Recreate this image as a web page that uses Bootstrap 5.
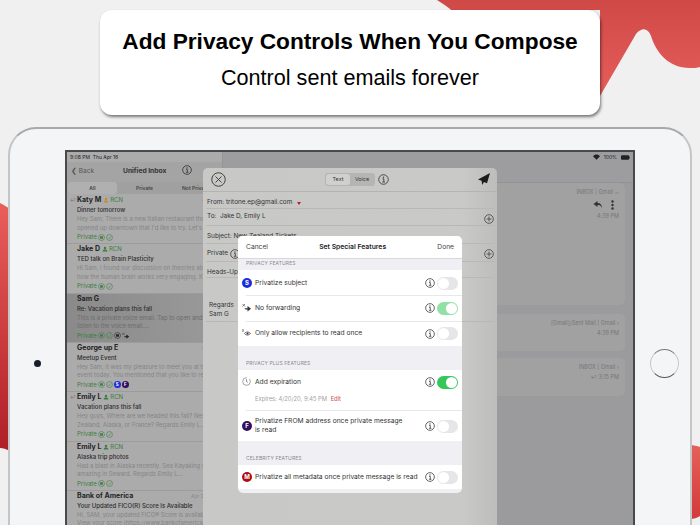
<!DOCTYPE html>
<html lang="en">
<head>
  <meta charset="UTF-8" />
  <meta name="viewport" content="width=device-width, initial-scale=1.0" />
  <title>Add Privacy Controls When You Compose</title>
  <link href="https://cdn.jsdelivr.net/npm/bootstrap@5.3.3/dist/css/bootstrap.min.css" rel="stylesheet">
  <style>
    html, body { margin: 0; background: #f0f0f0; }
    body { font-family: "Liberation Sans", Arial, sans-serif; }
    .stage { position: relative; width: 700px; height: 525px; overflow: hidden; background: #f0f0f0; }
    .blobs { position: absolute; left: 0; top: 0; }

    .banner { position: relative; width: 500px; height: 105px; margin: 10px 0 0 100px; border-radius: 12px; background: #fff; box-shadow: 1px 2px 3px rgba(0,0,0,.5); color: #000; }
    .banner h1 { font-size: 22.7px; font-weight: 700; line-height: 32px; margin: 0; padding-top: 15px; }
    .banner p { font-size: 21.6px; line-height: 28px; margin: 7px 0 0; }

    .ipad { position: relative; width: 684px; height: 400px; margin: 12px 0 0 8px; padding: 21px 57px 0; border-radius: 28px 28px 0 0; background: #f4f5f7; border: 2px solid #c4c5c6; border-bottom: 0; border-top-color: #a8a9aa; }
    .cam { position: absolute; left: 24px; top: 231px; width: 7px; height: 7px; border-radius: 50%; background: #15202b; }
    .homebtn { position: absolute; left: 640px; top: 220px; width: 29px; height: 29px; border-radius: 50%; border: 1px solid #c9c9c9; border-top-color: #777; border-bottom-color: #555; }

    .screen { position: relative; display: flex; height: 100%; width: 570px; margin-left: -2px; border: solid #47494a; border-width: 2px 2px 0; background: #9b9b9d; font-family: Inter, "Liberation Sans", sans-serif; color: #2a2a2a; overflow: hidden; }
    .pane-list { width: 156px; flex: none; background: #ababab; border-right: 1px solid #969696; }
    .pane-read { flex: 1; min-width: 0; display: flex; flex-direction: column; }
    .sbar { height: 10px; font-size: 5px; line-height: 10px; padding: 0 3px; color: #222; }
    .lnav { height: 20px; background: #a4a4a4; position: relative; }
    .lnav .back { color: #555; position: absolute; left: 4px; top: 3px; font-size: 6.5px; line-height: 12px; }
    .lnav .ttl { position: absolute; left: 56px; top: 3px; font-weight: 700; font-size: 6.7px; line-height: 12px; color: #333; }
    .lnav svg.inf { position: absolute; left: 115px; top: 3px; }
    .seg { display: flex; height: 12px; margin: 0 0 1px 1px; background: #a0a0a0; font-size: 5px; line-height: 12px; font-weight: 600; text-align: center; color: #444; }
    .seg span { width: 51px; flex: none; }
    .seg .on { background: #b0b0b0; border-radius: 3px; width: 49px; margin-right: 2px; }
    .msg { height: 49.33px; padding: 0 0 0 10px; position: relative; border-bottom: 1px solid #9c9c9c; white-space: nowrap; overflow: hidden; }
    .msg.sel { background: linear-gradient(90deg,#8a8a8a,#9a9a9a); }
    .msg .nm { font-size: 7px; font-weight: 700; line-height: 10px; color: #252525; display: flex; align-items: center; gap: 2px; }
    .msg .rcn { font-weight: 400; font-size: 6px; color: #3c7d40; margin-left: -1px; }
    .msg .subj { font-size: 6px; line-height: 10px; font-weight: 500; color: #2e2e2e; }
    .msg .pv { font-size: 5.9px; line-height: 8.5px; color: #858585; }
    .sel .pv { color: #6c6c6c; }
    .msg .st { font-size: 6px; line-height: 10px; color: #3c7d40; display: flex; align-items: center; gap: 1px; }
    .msg .tm { position: absolute; right: 0; top: 0; font-size: 5px; line-height: 10px; color: #8a8a8a; }
    .msg .rp { position: absolute; left: 3px; top: 0; font-size: 5px; line-height: 10px; color: #777; }
    .dotb { display: inline-block; width: 7px; height: 7px; border-radius: 50%; color: #fff; font-size: 4.5px; line-height: 7px; text-align: center; font-weight: 700; }
    .dotb.big { width: 10px; height: 10px; line-height: 10px; font-size: 6px; left: 4px; }
    .bg-s { background: #1b2dd8; }
    .bg-f { background: #32105c; }
    .bg-m { background: #a80f12; }

    .rhead { height: 31px; background: #9d9d9f; flex: none; border-bottom: 1px solid #939393; position: relative; }
    .rcard { margin: 0 8px 0 0; border-radius: 5px; background: #a1a1a2; font-size: 5.5px; color: #777; text-align: right; padding: 5px 6px 0 0; flex: none; }
    .rcard .lbl { line-height: 9px; }
    .rc1 { height: 122px; }
    .rc2 { height: 37px; margin-top: 9px; }
    .rc3 { height: 38px; margin-top: 7px; }
    .acts { height: 13px; margin: 1px 5px 0 0; }
    .after { margin-top: 1px; }

    .compose { position: absolute; left: 136px; top: 16px; width: 294px; height: 362px; border-radius: 5px 5px 0 0; background: linear-gradient(90deg,#c8c9c7,#c9cac8 88%,#bdbebc); font-size: 6.4px; color: #333; }
    .ctop { height: 24px; position: relative; border-bottom: 1px solid #b4b5b3; }
    .ctop .xb { position: absolute; left: 8px; top: 4px; }
    .ctop .send { position: absolute; left: 275px; top: 5px; }
    .ctop .inf2 { position: absolute; left: 175px; top: 6px; }
    .tv { position: absolute; left: 122px; top: 5px; width: 50px; height: 13px; display: flex; border-radius: 3px; background: #b5b6b4; padding: 1px; font-size: 5.4px; line-height: 11px; text-align: center; }
    .tv span { flex: 1; }
    .tv .on { background: #d0d1cf; border-radius: 3px; }
    .cf { position: relative; margin: 0 3px; padding: 3px 0 0 1px; display: flex; align-items: center; gap: 3px; border-bottom: 1px solid #b8b9b7; }
    .f1 { height: 17px; padding-top: 6px; }
    .f2 { height: 17px; align-items: flex-start; }
    .f3 { height: 18px; padding-top: 5px; }
    .f4 { height: 18px; gap: 2px; }
    .f5 { height: 16px; padding-top: 6px; }
    .f6 { height: 44px; align-items: flex-end; padding: 0 0 2px 3px; line-height: 9px; }
    .tri { width: 0; height: 0; border: solid transparent; border-width: 3px 2.5px 0; border-top-color: #b3222a; margin-left: 2px; }
    .cf svg.pl { position: absolute; left: 278px; top: 5px; }

    .sheet { position: absolute; left: 35px; top: 68px; width: 224px; height: 257px; border-radius: 5px; background: #f0f0f4; overflow: hidden; font-size: 6.7px; color: #333; }
    .shead { height: 23px; background: #fff; border-bottom: 1px solid #d8d8dc; display: flex; align-items: center; justify-content: space-between; padding: 1px 8px 0; color: #444; }
    .shead b { font-weight: 600; color: #222; font-size: 6.8px; }
    .sect { font-size: 5px; color: #8a8a8e; padding-left: 8px; letter-spacing: .1px; }
    .s1 { height: 11px; line-height: 9px; }
    .s2 { height: 24px; line-height: 10px; padding-top: 12px; }
    .rows { --bs-list-group-bg: #fff; --bs-list-group-border-width: 0; --bs-list-group-item-padding-x: 0; --bs-list-group-item-padding-y: 0; --bs-list-group-color: #333; }
    .rw { display: flex; align-items: center; height: 25.33px; position: relative; padding: 1px 4px 0 17px !important; font-size: 6.7px; line-height: 9px; }
    .rw + .rw::before { content: ""; position: absolute; left: 8px; right: 0; top: 0; border-top: 1px solid #e8e8ea; }
    .rw .ic { position: absolute; left: 4px; top: 50%; margin-top: -5px; }
    .rw .tx { flex: 1; min-width: 0; }
    .rw.tall { height: 40.5px; display: block; padding-top: 6px !important; }
    .tall .ln { display: flex; align-items: center; height: 13px; }
    .tall .ic { top: 7px; margin-top: 0; }
    .exp { font-size: 5.8px; color: #a2a2a2; margin-top: 6px; line-height: 8px; }
    .exp span { color: #d24a4f; margin-left: 2px; }
    .rw.two { height: 30.5px; }
    .rw.two .tx { padding-right: 20px; }
    .rw.last { height: 24px; }
    .rw svg.inf { flex: none; margin-right: 2px; }
    .form-switch.tg { padding: 0; margin: 0; min-height: 0; height: 13px; line-height: 0; flex: none; }
    .form-switch.tg .form-check-input { width: 21px; height: 13px; margin: 0; float: none; border: 0; background-color: #e6e6e8; --bs-form-switch-bg: url("data:image/svg+xml,%3csvg xmlns='http://www.w3.org/2000/svg' viewBox='-4 -4 8 8'%3e%3ccircle r='3.4' fill='%23fff'/%3e%3c/svg%3e"); }
    .form-switch.tg .form-check-input:checked { background-color: #35c759; }
    .form-switch.tg .form-check-input.pale:checked { background-color: #93e0a6; }
  </style>
</head>
<body>
  <svg width="0" height="0" class="position-absolute">
    <symbol id="i-info" viewBox="0 0 20 20"><circle cx="10" cy="10" r="8.7" fill="none" stroke="currentColor" stroke-width="1.5"/><circle cx="10" cy="5.8" r="1.2" fill="currentColor"/><path d="M8 8.8h2.6v5.6M7.8 14.6h5" fill="none" stroke="currentColor" stroke-width="1.5"/></symbol>
    <symbol id="i-plus" viewBox="0 0 20 20"><circle cx="10" cy="10" r="8.7" fill="none" stroke="currentColor" stroke-width="1.4"/><path d="M10 5v10M5 10h10" stroke="currentColor" stroke-width="1.4"/></symbol>
    <symbol id="i-lock" viewBox="0 0 20 20"><circle cx="10" cy="10" r="8.5" fill="none" stroke="currentColor" stroke-width="1.6"/><rect x="6" y="6.5" width="8" height="7" fill="currentColor"/></symbol>
    <symbol id="i-check" viewBox="0 0 20 20"><circle cx="10" cy="10" r="8.5" fill="none" stroke="currentColor" stroke-width="1.6"/><path d="M6 10.5l3 3 5.5-7" fill="none" stroke="currentColor" stroke-width="1.6"/></symbol>
    <symbol id="i-person" viewBox="0 0 20 20"><circle cx="10" cy="6.5" r="4" fill="currentColor"/><path d="M2 18c1-6 4-6.500 8-6.500s7 .5 8 6.500z" fill="currentColor"/></symbol>
    <symbol id="i-nofwd" viewBox="0 0 20 20"><path d="M5 10.500h6V6l7 5.500-7 5.500v-4H7z" fill="currentColor"/><path d="M1 2l5 5M6 2L1 7" stroke="currentColor" stroke-width="1.2"/></symbol>
  </svg>

  <div class="stage">
    <svg class="blobs" width="700" height="525" viewBox="0 0 700 525">
      <defs>
        <linearGradient id="g-top" x1="0" y1="0" x2="0" y2="1"><stop offset="0" stop-color="#cf4947"/><stop offset="1" stop-color="#e65e5a"/></linearGradient>
        <linearGradient id="g-left" x1="0" y1="0" x2="0" y2="1"><stop offset="0" stop-color="#e95f5b"/><stop offset="1" stop-color="#b01e26"/></linearGradient>
        <linearGradient id="g-right" x1="0" y1="0" x2="0" y2="1"><stop offset="0" stop-color="#e5605b"/><stop offset="1" stop-color="#d33a3c"/></linearGradient>
      </defs>
      <path d="M437 0C445 5 455 12 452 12L600 10V96L636 34C642 27 648 28 651 36C656 52 668 68 690 68C694 68 697 68 700 67V0Z" fill="url(#g-top)"/>
      <path d="M0 203C4 205 7 207 10 209V451C6 449 3 448 0 448Z" fill="url(#g-left)"/>
      <path d="M690 445C694 445 697 446 700 447V516C697 518 694 519 690 519Z" fill="url(#g-right)"/>
    </svg>

    <div class="banner text-center">
      <h1>Add Privacy Controls When You Compose</h1>
      <p>Control sent emails forever</p>
    </div>

    <div class="ipad">
      <div class="cam"></div>
      <div class="homebtn"></div>
      <div class="screen">
        <div class="pane-list">
          <div class="sbar">9:08 PM &nbsp;Thu Apr 16</div>
          <div class="lnav">
            <span class="back">&#10094; Back</span>
            <span class="ttl">Unified Inbox</span>
            <svg class="inf" width="10" height="10"><use href="#i-info"/></svg>
          </div>
          <div class="seg"><span class="on">All</span><span>Private</span><span>Not Private</span></div>

          <div class="msg">
            <span class="rp">&#8617;</span>
            <div class="nm">Katy M <svg width="6" height="6" style="color:#c98a2e"><use href="#i-person"/></svg><span class="rcn">RCN</span></div>
            <div class="subj">Dinner tomorrow</div>
            <div class="pv">Hey Sam, There is a new Italian restaurant that</div>
            <div class="pv">opened up downtown that I'd like to try. Let's go</div>
            <div class="st">Private <svg width="7" height="7"><use href="#i-lock"/></svg> <svg width="7" height="7"><use href="#i-check"/></svg></div>
            <span class="tm">4:59 PM</span>
          </div>
          <div class="msg">
            <div class="nm">Jake D <svg width="6" height="6" style="color:#3c7d40"><use href="#i-person"/></svg><span class="rcn">RCN</span></div>
            <div class="subj">TED talk on Brain Plasticity</div>
            <div class="pv">Hi Sam, I found our discussion on theories about</div>
            <div class="pv">how the human brain works very engaging. Kind of</div>
            <div class="st">Private <svg width="7" height="7"><use href="#i-lock"/></svg> <svg width="7" height="7"><use href="#i-check"/></svg></div>
            <span class="tm">4:49 PM</span>
          </div>
          <div class="msg sel">
            <div class="nm">Sam G</div>
            <div class="subj">Re: Vacation plans this fall</div>
            <div class="pv">This is a private voice email. Tap to open and</div>
            <div class="pv">listen to the voice email....</div>
            <div class="st">Private <svg width="7" height="7"><use href="#i-lock"/></svg> <svg width="7" height="7"><use href="#i-check"/></svg> <svg width="7" height="7" style="color:#222"><use href="#i-lock"/></svg> <svg width="8" height="8" style="color:#222"><use href="#i-nofwd"/></svg></div>
            <span class="tm">4:39 PM</span>
          </div>
          <div class="msg">
            <div class="nm">George up E</div>
            <div class="subj">Meetup Event</div>
            <div class="pv">Hey Sam, It was my pleasure to meet you at the</div>
            <div class="pv">event today. You mentioned that you like to read</div>
            <div class="st">Private <svg width="7" height="7"><use href="#i-lock"/></svg> <svg width="7" height="7"><use href="#i-check"/></svg> <span class="dotb bg-s">S</span> <span class="dotb bg-f">F</span></div>
            <span class="tm">4:09 PM</span>
          </div>
          <div class="msg">
            <span class="rp">&#8617;</span>
            <div class="nm">Emily L <svg width="6" height="6" style="color:#3c7d40"><use href="#i-person"/></svg><span class="rcn">RCN</span></div>
            <div class="subj">Vacation plans this fall</div>
            <div class="pv">Hey guys, Where are we headed this fall? New</div>
            <div class="pv">Zealand, Alaska, or France? Regards Emily L...</div>
            <div class="st">Private <svg width="7" height="7"><use href="#i-lock"/></svg> <svg width="7" height="7"><use href="#i-check"/></svg></div>
            <span class="tm">3:15 PM</span>
          </div>
          <div class="msg">
            <div class="nm">Emily L <svg width="6" height="6" style="color:#3c7d40"><use href="#i-person"/></svg><span class="rcn">RCN</span></div>
            <div class="subj">Alaska trip photos</div>
            <div class="pv">Had a blast in Alaska recently. Sea Kayaking was</div>
            <div class="pv">amazing in Seward. Regards Emily L...</div>
            <div class="st">Private <svg width="7" height="7"><use href="#i-lock"/></svg> <svg width="7" height="7"><use href="#i-check"/></svg></div>
            <span class="tm">3:10 PM</span>
          </div>
          <div class="msg">
            <div class="nm">Bank of America</div>
            <div class="subj">Your Updated FICO(R) Score Is Available</div>
            <div class="pv">Hi, SAM, your updated FICO&reg; Score is available</div>
            <div class="pv">View your score (https://www.bankofamerica.com</div>
            <span class="tm">Apr 26, 2020</span>
          </div>
        </div>

        <div class="pane-read">
          <div class="rhead"></div>
          <div class="rcard rc1">
            <div class="lbl">INBOX | Gmail &#8964;</div>
            <div class="acts d-flex justify-content-end align-items-center gap-2">
              <svg width="10" height="9" viewBox="0 0 20 18" style="color:#333"><path d="M9 2L1 8l8 6v-4c4 0 7 1 9 6 0-6-3-10-9-10z" fill="currentColor"/></svg>
              <svg width="3" height="10" viewBox="0 0 3 10" style="color:#333"><circle cx="1.500" cy="1.500" r="1.200" fill="currentColor"/><circle cx="1.500" cy="5" r="1.200" fill="currentColor"/><circle cx="1.500" cy="8.500" r="1.200" fill="currentColor"/></svg>
            </div>
            <div class="lbl after">4:39 PM</div>
          </div>
          <div class="rcard rc2">
            <div class="lbl">[Gmail]/Sent Mail | Gmail &#8250;</div>
            <div class="lbl after">4:39 PM</div>
          </div>
          <div class="rcard rc3">
            <div class="lbl">INBOX | Gmail &#8250;</div>
            <div class="lbl after">&#8617; 3:15 PM</div>
          </div>
        </div>

        <div class="position-absolute top-0 end-0 d-flex align-items-center sbar">
          <svg class="me-1" width="7" height="6" viewBox="0 0 14 11"><path d="M7 11L0 4c4-4.500 10-4.500 14 0z" fill="#222"/></svg>
          <span class="me-1">100%</span>
          <svg width="9" height="5" viewBox="0 0 20 10"><rect width="18" height="10" rx="2" fill="#222"/><rect x="18.500" y="3" width="1.500" height="4" fill="#222"/></svg>
        </div>

        <div class="compose">
          <div class="ctop">
            <svg class="xb" width="15" height="15" viewBox="0 0 20 20"><circle cx="10" cy="10" r="9" fill="none" stroke="#333" stroke-width="1.200"/><path d="M6 6l8 8M14 6l-8 8" stroke="#333" stroke-width="1.200"/></svg>
            <div class="tv"><span class="on">Text</span><span>Voice</span></div>
            <svg class="inf2" width="11" height="11"><use href="#i-info"/></svg>
            <svg class="send" width="12" height="12" viewBox="0 0 20 20"><path d="M20 0L0 11l6 2 1 7 3-5 5 2z" fill="#1c1c1c"/></svg>
          </div>
          <div class="cf f1">From: tritone.ep@gmail.com <span class="tri"></span></div>
          <div class="cf f2">To: &nbsp;Jake D, Emily L<svg class="pl" width="10" height="10"><use href="#i-plus"/></svg></div>
          <div class="cf f3">Subject: New Zealand Tickets</div>
          <div class="cf f4">Private <svg width="10" height="10"><use href="#i-info"/></svg><svg class="pl" width="10" height="10"><use href="#i-plus"/></svg></div>
          <div class="cf f5">Heads-Up</div>
          <div class="cf f6"><div>Regards<br>Sam G</div></div>

          <div class="sheet">
            <div class="shead"><span>Cancel</span><b>Set Special Features</b><span>Done</span></div>
            <div class="sect s1">PRIVACY FEATURES</div>
            <div class="list-group list-group-flush rows">
              <div class="list-group-item rw">
                <span class="dotb big bg-s ic">S</span>
                <span class="tx">Privatize subject</span>
                <svg class="inf" width="10" height="10"><use href="#i-info"/></svg>
                <div class="form-check form-switch tg"><input class="form-check-input" type="checkbox" role="switch" aria-label="Privatize subject"></div>
              </div>
              <div class="list-group-item rw">
                <svg class="ic" width="10" height="10"><use href="#i-nofwd"/></svg>
                <span class="tx">No forwarding</span>
                <svg class="inf" width="10" height="10"><use href="#i-info"/></svg>
                <div class="form-check form-switch tg"><input class="form-check-input pale" type="checkbox" role="switch" checked aria-label="No forwarding"></div>
              </div>
              <div class="list-group-item rw">
                <svg class="ic" width="10" height="10" viewBox="0 0 20 20"><path d="M5 11c3-4 8-4 12 0-4 4-9 4-12 0z" fill="none" stroke="#333" stroke-width="1.500"/><circle cx="11" cy="11" r="2" fill="#333"/><path d="M2 2v6" stroke="#333" stroke-width="1.500"/></svg>
                <span class="tx">Only allow recipients to read once</span>
                <svg class="inf" width="10" height="10"><use href="#i-info"/></svg>
                <div class="form-check form-switch tg"><input class="form-check-input" type="checkbox" role="switch" aria-label="Only allow recipients to read once"></div>
              </div>
            </div>
            <div class="sect s2">PRIVACY PLUS FEATURES</div>
            <div class="list-group list-group-flush rows">
              <div class="list-group-item rw tall">
                <svg class="ic" width="9" height="9" viewBox="0 0 20 20"><circle cx="10" cy="10" r="8.500" fill="none" stroke="#777" stroke-width="1.500" stroke-dasharray="40 6"/><path d="M10 5v5l3 2" fill="none" stroke="#555" stroke-width="1.500"/></svg>
                <div class="ln">
                  <span class="tx">Add expiration</span>
                  <svg class="inf" width="10" height="10"><use href="#i-info"/></svg>
                  <div class="form-check form-switch tg"><input class="form-check-input" type="checkbox" role="switch" checked aria-label="Add expiration"></div>
                </div>
                <div class="exp">Expires: 4/20/20, 9:45 PM <span>Edit</span></div>
              </div>
              <div class="list-group-item rw two">
                <span class="dotb big bg-f ic">F</span>
                <span class="tx">Privatize FROM address once private message is read</span>
                <svg class="inf" width="10" height="10"><use href="#i-info"/></svg>
                <div class="form-check form-switch tg"><input class="form-check-input" type="checkbox" role="switch" aria-label="Privatize FROM address"></div>
              </div>
            </div>
            <div class="sect s2">CELEBRITY FEATURES</div>
            <div class="list-group list-group-flush rows">
              <div class="list-group-item rw last">
                <span class="dotb big bg-m ic">M</span>
                <span class="tx">Privatize all metadata once private message is read</span>
                <svg class="inf" width="10" height="10"><use href="#i-info"/></svg>
                <div class="form-check form-switch tg"><input class="form-check-input" type="checkbox" role="switch" aria-label="Privatize all metadata"></div>
              </div>
            </div>
          </div>
        </div>
      </div>
    </div>
  </div>
  <script src="https://cdn.jsdelivr.net/npm/bootstrap@5.3.3/dist/js/bootstrap.bundle.min.js"></script>
</body>
</html>
